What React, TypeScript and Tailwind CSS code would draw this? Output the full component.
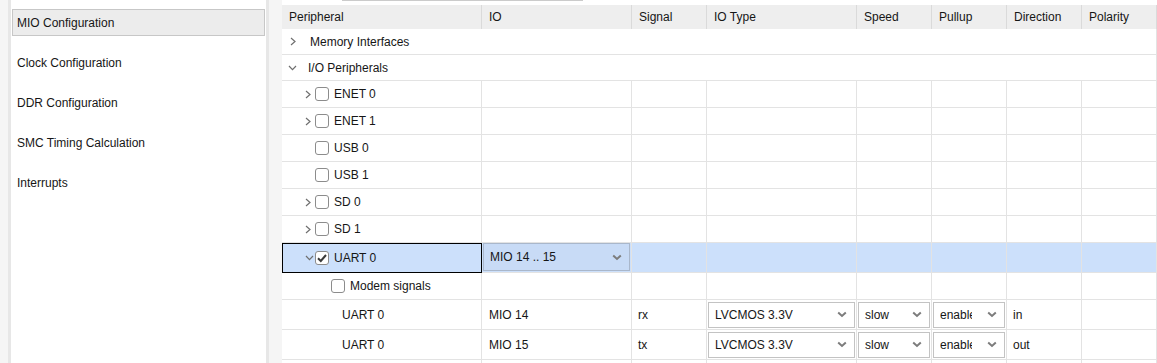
import React from 'react';

const cols = ['w-[200px]', 'w-[150px]', 'w-[75px]', 'w-[150px]', 'w-[75px]', 'w-[75px]', 'w-[75px]', 'w-[75px]'];
const headers = ['Peripheral', 'IO', 'Signal', 'IO Type', 'Speed', 'Pullup', 'Direction', 'Polarity'];

const navItems = ['MIO Configuration', 'Clock Configuration', 'DDR Configuration', 'SMC Timing Calculation', 'Interrupts'];

function TreeRight() {
  return (
    <svg width="6" height="9" viewBox="0 0 6 9" className="shrink-0">
      <path d="M1 1 L5 4.5 L1 8" stroke="#6f6f6f" strokeWidth="1.2" fill="none" />
    </svg>
  );
}

function TreeDown() {
  return (
    <svg width="9" height="6" viewBox="0 0 9 6" className="shrink-0">
      <path d="M1 1 L4.5 4.6 L8 1" stroke="#6f6f6f" strokeWidth="1.2" fill="none" />
    </svg>
  );
}

function SelectChevron() {
  return (
    <svg width="10" height="7" viewBox="0 0 10 7" className="shrink-0">
      <path d="M1.2 1.5 L5 5 L8.8 1.5" stroke="#7c7c7c" strokeWidth="2" fill="none" />
    </svg>
  );
}

function Checkbox({ checked = false }: { checked?: boolean }) {
  return (
    <span className="w-[14px] h-[14px] shrink-0 rounded-[3px] border border-[#8c8c8c] bg-white flex items-center justify-center">
      {checked && (
        <svg width="12" height="12" viewBox="0 0 12 12">
          <path d="M2 6.2 L4.8 9 L10 3" stroke="#3a3a3a" strokeWidth="2" fill="none" />
        </svg>
      )}
    </span>
  );
}

function Select({ value, blue = false }: { value: string; blue?: boolean }) {
  return (
    <div
      className={
        'flex-1 min-w-0 mx-px flex items-center border ' +
        (blue ? 'h-[28px] bg-[#c8dbf6] border-[#a9b7cb]' : 'h-[26px] bg-white border-[#c3c3c3]')
      }
    >
      <span className="flex-1 min-w-0 overflow-hidden whitespace-nowrap ml-[6px] mr-[8px]">{value}</span>
      <span className="w-[24px] shrink-0 flex justify-center pr-[1px]">
        <SelectChevron />
      </span>
    </div>
  );
}

function Cell({ i, children, h, className = '' }: { i: number; children?: React.ReactNode; h: string; className?: string }) {
  return (
    <div className={`${cols[i]} ${h} shrink-0 flex items-center border-r border-b border-[#e3e3e3] ${className}`}>
      {children}
    </div>
  );
}

function CategoryRow({ label, open, h }: { label: string; open?: boolean; h: string }) {
  return (
    <div className={`${h} flex items-center border-b border-r border-[#e3e3e3]`}>
      {open ? (
        <span className="flex items-center pl-[6px]">
          <TreeDown />
          <span className="ml-[11px]">{label}</span>
        </span>
      ) : (
        <span className="flex items-center pl-[8px]">
          <TreeRight />
          <span className="ml-[14px]">{label}</span>
        </span>
      )}
    </div>
  );
}

function PeripheralRow({ label, expandable }: { label: string; expandable: boolean }) {
  return (
    <div className="flex">
      <Cell i={0} h="h-[27px]" className="pl-[23px]">
        <span className="w-[6px] flex">{expandable && <TreeRight />}</span>
        <span className="ml-[4px]">
          <Checkbox />
        </span>
        <span className="ml-[5px]">{label}</span>
      </Cell>
      {[1, 2, 3, 4, 5, 6, 7].map((i) => (
        <Cell key={i} i={i} h="h-[27px]" />
      ))}
    </div>
  );
}

function SignalRow({ io, signal, dir }: { io: string; signal: string; dir: string }) {
  return (
    <div className="flex">
      <Cell i={0} h="h-[30px]" className="pl-[60px]">UART 0</Cell>
      <Cell i={1} h="h-[30px]" className="pl-[7px]">{io}</Cell>
      <Cell i={2} h="h-[30px]" className="pl-[6px]">{signal}</Cell>
      <Cell i={3} h="h-[30px]">
        <Select value="LVCMOS 3.3V" />
      </Cell>
      <Cell i={4} h="h-[30px]">
        <Select value="slow" />
      </Cell>
      <Cell i={5} h="h-[30px]">
        <Select value="enable" />
      </Cell>
      <Cell i={6} h="h-[30px]" className="pl-[6px]">{dir}</Cell>
      <Cell i={7} h="h-[30px]" />
    </div>
  );
}

export default function App() {
  return (
    <div className="flex w-[1157px] h-[363px] overflow-hidden bg-white text-[12px] text-[#161616] font-['Liberation_Sans',Arial,sans-serif]">
      {/* sidebar */}
      <div className="w-[282px] shrink-0 h-full bg-[#f5f5f5] flex">
        <div className="ml-[8px] w-[261px] h-full bg-white border-x-[3px] border-[#e7e7e7] pt-[9px] flex flex-col gap-[13px]">
          {navItems.map((item, idx) => (
            <div
              key={item}
              className={
                'mx-px h-[27px] flex items-center pl-[4px] border ' +
                (idx === 0 ? 'bg-[#ececec] border-[#c7c7c7]' : 'border-transparent')
              }
            >
              {item}
            </div>
          ))}
        </div>
      </div>

      {/* table */}
      <div className="flex-1 min-w-0">
        <div className="h-[5px]">
          <div className="ml-[60px] w-[241px] h-px bg-[#cbcbcb]" />
        </div>
        <div className="flex h-[24px] bg-[#eeeeee]">
          {headers.map((hd, i) => (
            <div key={hd} className={`${cols[i]} shrink-0 flex items-center pl-[7px] border-r border-[#dadada]`}>
              {hd}
            </div>
          ))}
        </div>

        <CategoryRow label="Memory Interfaces" h="h-[26px]" />
        <CategoryRow label="I/O Peripherals" open h="h-[26px]" />
        <PeripheralRow label="ENET 0" expandable />
        <PeripheralRow label="ENET 1" expandable />
        <PeripheralRow label="USB 0" expandable={false} />
        <PeripheralRow label="USB 1" expandable={false} />
        <PeripheralRow label="SD 0" expandable />
        <PeripheralRow label="SD 1" expandable />

        {/* selected row */}
        <div className="flex bg-[#cce0fb]">
          <div className="w-[200px] h-[30px] shrink-0 flex items-center pl-[22px] border border-black">
            <span className="w-[9px] flex">
              <TreeDown />
            </span>
            <span className="ml-[1px]">
              <Checkbox checked />
            </span>
            <span className="ml-[5px]">UART 0</span>
          </div>
          <Cell i={1} h="h-[30px]" className="pb-px">
            <Select value="MIO 14 .. 15" blue />
          </Cell>
          {[2, 3, 4, 5, 6, 7].map((i) => (
            <Cell key={i} i={i} h="h-[30px]" />
          ))}
        </div>

        <div className="flex">
          <Cell i={0} h="h-[27px]" className="pl-[49px]">
            <Checkbox />
            <span className="ml-[5px]">Modem signals</span>
          </Cell>
          {[1, 2, 3, 4, 5, 6, 7].map((i) => (
            <Cell key={i} i={i} h="h-[27px]" />
          ))}
        </div>

        <SignalRow io="MIO 14" signal="rx" dir="in" />
        <SignalRow io="MIO 15" signal="tx" dir="out" />

        <div className="flex">
          {[0, 1, 2, 3, 4, 5, 6, 7].map((i) => (
            <Cell key={i} i={i} h="h-[27px]" />
          ))}
        </div>
      </div>
    </div>
  );
}
